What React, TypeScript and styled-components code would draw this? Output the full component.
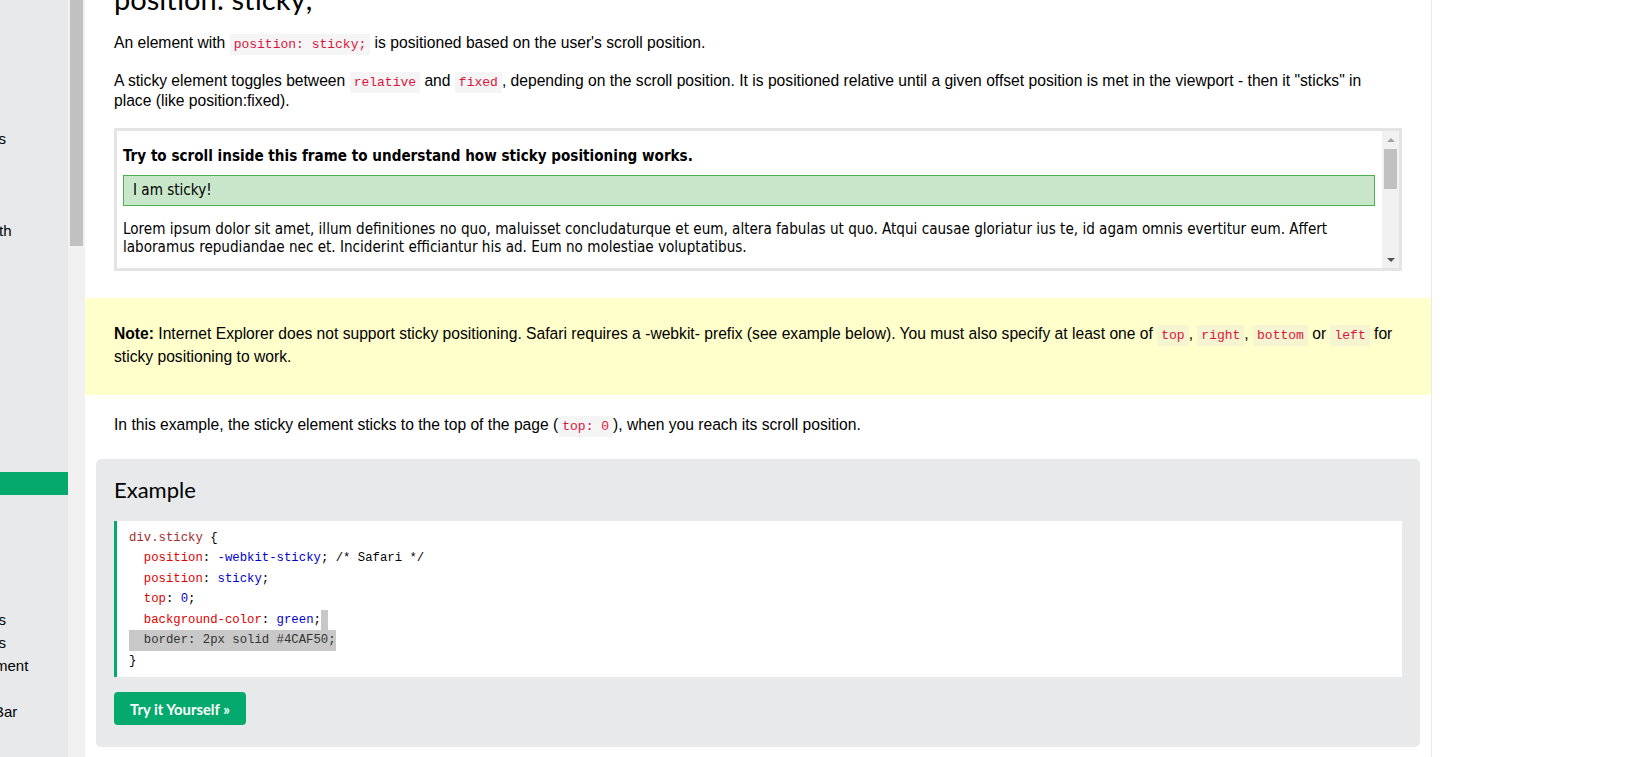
import React from "react";
import styled, { createGlobalStyle } from "styled-components";

const GlobalStyle = createGlobalStyle`
  *, *::before, *::after {
    box-sizing: border-box;
  }
  html, body {
    margin: 0;
    padding: 0;
    height: 100%;
    overflow: hidden;
    background: #fff;
  }
  body {
    font-family: "Liberation Sans", Arial, sans-serif;
    font-size: 15.65px;
    color: #000;
  }
`;

const Page = styled.div`
  display: flex;
  width: 1626px;
  height: 757px;
  overflow: hidden;
`;

/* left navigation, scrolled sideways so only word endings show */
const Sidebar = styled.nav`
  width: 68px;
  flex: none;
  background: #e7e9eb;
  overflow: hidden;
`;

const NavList = styled.div`
  display: flex;
  flex-direction: column;
  margin-top: -9.5px;
`;

const NavItem = styled.div<{ $shift?: number; $active?: boolean }>`
  height: 22.93px;
  line-height: 22.93px;
  font-size: 15px;
  white-space: nowrap;
  overflow: hidden;
  text-indent: ${(p) => p.$shift ?? 0}px;
  background: ${(p) => (p.$active ? "#04aa6d" : "transparent")};
  color: ${(p) => (p.$active ? "#fff" : "#000")};
`;

const ScrollTrack = styled.div`
  width: 17px;
  flex: none;
  background: #f1f1f1;
  padding: 0 2px;
`;

const ScrollThumb = styled.div<{ $height: number }>`
  height: ${(p) => p.$height}px;
  background: #c1c1c1;
`;

const Main = styled.main`
  width: 1347px;
  flex: none;
  border-right: 1px solid #e7e9eb;
  padding: 0 29px;
  display: flex;
  flex-direction: column;
`;

const SectionTitle = styled.h2`
  margin: -17.2px 0 18.2px;
  font-family: Lato, "Open Sans", sans-serif;
  font-weight: 400;
  font-size: 29px;
  line-height: 32px;
  white-space: nowrap;
`;

const Para = styled.p<{ $top?: number }>`
  margin: ${(p) => p.$top ?? 0}px 0 0;
  line-height: 20.5px;
  white-space: nowrap;
`;

const Code = styled.code`
  font-family: "Liberation Mono", Consolas, monospace;
  font-size: 13px;
  line-height: 1;
  color: crimson;
  background: rgba(222, 222, 222, 0.3);
  padding: 3px 4px;
`;

/* the demo frame */
const Frame = styled.div`
  margin-top: 16.25px;
  height: 143px;
  border: 3px solid #e4e4e4;
  display: flex;
  background: #fff;
`;

const FrameBody = styled.div`
  flex: 1;
  overflow: hidden;
  padding: 15.5px 7px 0 6px;
  font-family: "DejaVu Sans Condensed", Tahoma, "Liberation Sans", sans-serif;
  font-size: 15.1px;
  display: flex;
  flex-direction: column;
`;

const FrameHeading = styled.div`
  font-weight: 700;
  line-height: 18px;
  white-space: nowrap;
`;

const StickyBox = styled.div`
  margin-top: 10.5px;
  height: 31px;
  line-height: 29px;
  padding: 0 9px;
  background: #c8e6c9;
  border: 1px solid #4caf50;
`;

const FrameText = styled.div`
  margin-top: 15.1px;
  line-height: 17.4px;
  white-space: nowrap;
`;

const FrameScroll = styled.div`
  width: 17px;
  flex: none;
  background: #f1f1f1;
  display: flex;
  flex-direction: column;
  align-items: center;
`;

const ScrollButton = styled.div`
  height: 17px;
  width: 17px;
  display: flex;
  align-items: center;
  justify-content: center;
`;

const Arrow = styled.div<{ $down?: boolean }>`
  width: 0;
  height: 0;
  border-left: 4px solid transparent;
  border-right: 4px solid transparent;
  ${(p) =>
    p.$down
      ? "border-top: 4px solid #505050;"
      : "border-bottom: 4px solid #a3a3a3;"}
`;

const FrameThumb = styled.div`
  width: 13px;
  height: 40px;
  margin-top: 1px;
  background: #c1c1c1;
`;

const Spacer = styled.div`
  flex: 1;
`;

/* yellow note panel */
const Note = styled.div`
  margin: 27px -29px 0;
  padding: 25px 29px 26.5px;
  background: #ffffcc;
  line-height: 22.5px;
  white-space: nowrap;
`;

/* example box */
const Example = styled.div`
  margin: 22.75px -18px 0;
  padding: 16.7px 18px 22px;
  background: #e7e9eb;
  border-radius: 5px;
  display: flex;
  flex-direction: column;
`;

const ExampleTitle = styled.h3`
  margin: 0;
  font-family: Lato, "Open Sans", sans-serif;
  font-weight: 400;
  font-size: 22px;
  line-height: 30px;
`;

const CodeBlock = styled.div`
  margin-top: 16.3px;
  background: #fff;
  border-left: 3px solid #04aa6d;
  padding: 6.5px 12px 6px;
  font-family: "Liberation Mono", Consolas, monospace;
  font-size: 12.3px;
  line-height: 20.5px;
  white-space: pre;
  color: #000;
`;

const Tok = styled.span<{ $kind: "sel" | "prop" | "val" }>`
  color: ${(p) =>
    p.$kind === "sel" ? "#a52a2a" : p.$kind === "prop" ? "#e00000" : "#0000cd"};
`;

const Selected = styled.span`
  display: inline-block;
  background: #c8c8c8;
  color: #333;
  line-height: 20.5px;
`;

const TryButton = styled.a`
  align-self: flex-start;
  margin-top: 15px;
  height: 33px;
  padding: 0 16px;
  display: inline-flex;
  align-items: center;
  background: #04aa6d;
  color: #fff;
  border-radius: 4px;
  font-family: Lato, "Open Sans", sans-serif;
  font-weight: 700;
  font-size: 14.8px;
  text-decoration: none;
`;

const RightArea = styled.div`
  flex: 1;
  background: #fff;
`;

type NavEntry = { text: string; shift?: number; active?: boolean };

const blank = (n: number): NavEntry[] =>
  Array.from({ length: n }, () => ({ text: "" }));

const navEntries: NavEntry[] = [
  ...blank(6),
  { text: "s", shift: -1.5 },
  ...blank(3),
  { text: "th", shift: -1 },
  ...blank(10),
  { text: "", active: true },
  ...blank(5),
  { text: "s", shift: -1.5 },
  { text: "s", shift: -1.5 },
  { text: "ment", shift: -5 },
  ...blank(1),
  { text: "Bar", shift: -6 },
  ...blank(1),
];

const App = () => (
  <>
    <GlobalStyle />
    <Page>
      <Sidebar>
        <NavList>
          {navEntries.map((e, i) => (
            <NavItem key={i} $shift={e.shift} $active={e.active}>
              {e.text}
            </NavItem>
          ))}
        </NavList>
      </Sidebar>
      <ScrollTrack>
        <ScrollThumb $height={246} />
      </ScrollTrack>

      <Main>
        <SectionTitle>position: sticky;</SectionTitle>
        <Para>
          An element with <Code>position: sticky;</Code> is positioned based on
          the user's scroll position.
        </Para>
        <Para $top={17.25}>
          A sticky element toggles between <Code>relative</Code> and{" "}
          <Code>fixed</Code>, depending on the scroll position. It is positioned
          relative until a given offset position is met in the viewport - then
          it "sticks" in
          <br />
          place (like position:fixed).
        </Para>

        <Frame>
          <FrameBody>
            <FrameHeading>
              Try to scroll inside this frame to understand how sticky
              positioning works.
            </FrameHeading>
            <StickyBox>I am sticky!</StickyBox>
            <FrameText>
              Lorem ipsum dolor sit amet, illum definitiones no quo, maluisset
              concludaturque et eum, altera fabulas ut quo. Atqui causae
              gloriatur ius te, id agam omnis evertitur eum. Affert
              <br />
              laboramus repudiandae nec et. Inciderint efficiantur his ad. Eum
              no molestiae voluptatibus.
            </FrameText>
          </FrameBody>
          <FrameScroll>
            <ScrollButton>
              <Arrow />
            </ScrollButton>
            <FrameThumb />
            <Spacer />
            <ScrollButton>
              <Arrow $down />
            </ScrollButton>
          </FrameScroll>
        </Frame>

        <Note>
          <b>Note:</b> Internet Explorer does not support sticky positioning.
          Safari requires a -webkit- prefix (see example below). You must also
          specify at least one of <Code>top</Code>, <Code>right</Code>,{" "}
          <Code>bottom</Code> or <Code>left</Code> for
          <br />
          sticky positioning to work.
        </Note>

        <Para $top={20.75}>
          In this example, the sticky element sticks to the top of the page (
          <Code>top: 0</Code>), when you reach its scroll position.
        </Para>

        <Example>
          <ExampleTitle>Example</ExampleTitle>
          <CodeBlock>
            <Tok $kind="sel">div.sticky</Tok> {"{"}
            {"\n  "}
            <Tok $kind="prop">position</Tok>: <Tok $kind="val">-webkit-sticky</Tok>; /* Safari */
            {"\n  "}
            <Tok $kind="prop">position</Tok>: <Tok $kind="val">sticky</Tok>;
            {"\n  "}
            <Tok $kind="prop">top</Tok>: <Tok $kind="val">0</Tok>;
            {"\n  "}
            <Tok $kind="prop">background-color</Tok>: <Tok $kind="val">green</Tok>;
            <Selected> </Selected>
            {"\n"}
            <Selected>{"  border: 2px solid #4CAF50;"}</Selected>
            {"\n}"}
          </CodeBlock>
          <TryButton href="#">Try it Yourself »</TryButton>
        </Example>
      </Main>
      <RightArea />
    </Page>
  </>
);

export default App;
